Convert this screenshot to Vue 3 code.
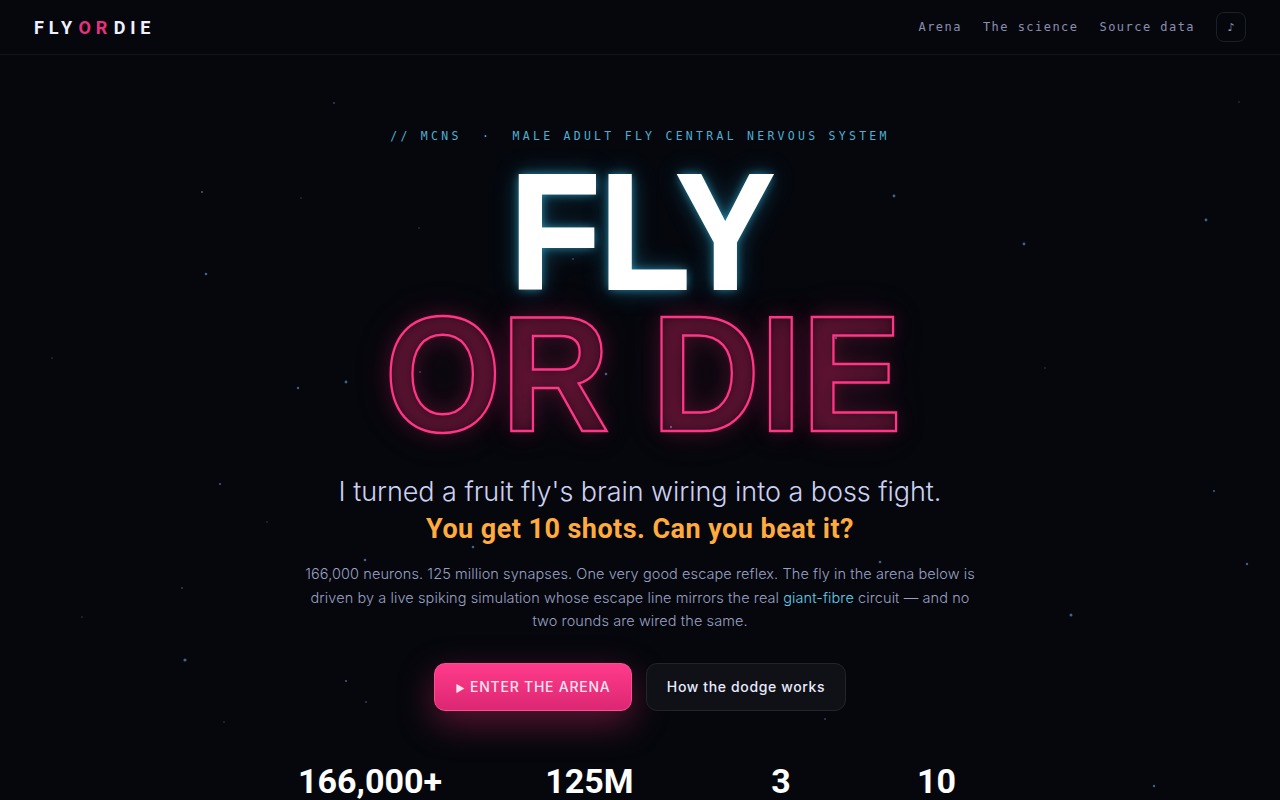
<template>
  <div class="page">
    <svg class="stars" width="1280" height="800" viewBox="0 0 1280 800">
      <circle v-for="(s, i) in stars" :key="i" :cx="s[0]" :cy="s[1]" :r="s[2]" :fill="s[3]" />
    </svg>

    <header class="topbar">
      <div class="logo">FLY <span class="logo-or">OR</span> DIE</div>
      <nav class="links">
        <a>Arena</a>
        <a>The science</a>
        <a>Source data</a>
        <button class="sound">♪</button>
      </nav>
    </header>

    <main class="hero">
      <p class="eyebrow">{{ eyebrow }}</p>
      <h1 class="title">
        <span class="fly">FLY</span>
        <span class="ordie">OR DIE</span>
      </h1>
      <p class="tagline">I turned a fruit fly's brain wiring into a boss fight.</p>
      <p class="challenge">You get 10 shots. Can you beat it?</p>
      <p class="blurb">
        166,000 neurons. 125 million synapses. One very good escape reflex. The fly in the arena below is<br />
        driven by a live spiking simulation whose escape line mirrors the real
        <a class="inline-link">giant-fibre</a> circuit — and no<br />
        two rounds are wired the same.
      </p>
      <div class="actions">
        <button class="btn btn-primary"><span class="play">▶</span> ENTER THE ARENA</button>
        <button class="btn btn-ghost">How the dodge works</button>
      </div>
      <div class="stats">
        <div v-for="s in statList" :key="s.value" class="stat" :class="s.cls">{{ s.value }}</div>
      </div>
    </main>
  </div>
</template>

<script setup>
const eyebrow = '// MCNS  ·  MALE ADULT FLY CENTRAL NERVOUS SYSTEM';

const statList = [
  { value: '166,000+', cls: 'stat-a' },
  { value: '125M', cls: 'stat-b' },
  { value: '3', cls: 'stat-c' },
  { value: '10', cls: 'stat-d' }
];

const dim = '#33425a';
const mid = '#4a6080';
const stars = [
  [334, 103, 1, dim], [1239, 102, 0.8, dim], [202, 192, 1, mid], [301, 198, 0.8, dim],
  [894, 196, 1.4, mid], [1206, 220, 1.4, mid], [419, 228, 0.8, dim], [1024, 244, 1.4, mid],
  [573, 259, 1, dim], [206, 274, 1.3, mid], [52, 358, 0.8, dim], [298, 388, 1.2, mid],
  [346, 382, 1.4, mid], [1045, 368, 0.8, dim], [420, 372, 1, dim], [606, 374, 1.3, mid],
  [836, 338, 1.2, mid], [671, 427, 1.2, mid], [220, 484, 1, mid], [1214, 491, 1, mid],
  [267, 522, 0.8, dim], [473, 547, 1.3, mid], [365, 560, 1.3, mid], [880, 562, 1.3, mid],
  [1247, 564, 1.2, mid], [182, 588, 1, dim], [82, 617, 0.8, dim], [1071, 615, 1.5, mid],
  [185, 660, 1.6, mid], [346, 681, 1, mid], [366, 702, 1, dim], [224, 722, 0.8, dim],
  [825, 719, 1, dim], [1154, 786, 1.2, mid]
];
</script>

<style scoped>
.page {
  position: relative;
  height: 800px;
  overflow: hidden;
  background: #05070d;
  color: #e8ebff;
  font-family: Inter, "Liberation Sans", sans-serif;
}

.stars {
  position: absolute;
  top: 0;
  left: 0;
}

.topbar {
  position: relative;
  height: 54px;
  display: flex;
  align-items: center;
  justify-content: space-between;
  padding: 0 34px;
  border-bottom: 1px solid #14161c;
}

.logo {
  font-family: Roboto, sans-serif;
  font-weight: 700;
  font-size: 18px;
  letter-spacing: 4.8px;
  word-spacing: -7.6px;
  white-space: pre;
  color: #eef0ff;
}

.logo-or {
  color: #e8317c;
}

.links {
  display: flex;
  align-items: center;
  gap: 21px;
  font-family: "DejaVu Sans Mono", monospace;
  font-size: 12px;
  letter-spacing: 1.46px;
  color: #8a8fb0;
}

.sound {
  width: 30px;
  height: 30px;
  padding: 0;
  background: transparent;
  border: 1px solid #1c1f28;
  border-radius: 8px;
  color: #8a8fb0;
  font-size: 11px;
  font-family: "DejaVu Sans", sans-serif;
}

.hero {
  position: relative;
  display: flex;
  flex-direction: column;
  align-items: center;
  padding-top: 74px;
}

.eyebrow {
  margin: 0;
  font-family: "DejaVu Sans Mono", monospace;
  font-size: 11.5px;
  line-height: 14px;
  letter-spacing: 3.27px;
  white-space: pre;
  color: #4db0d2;
}

.title {
  margin: 18px 0 0;
  display: flex;
  flex-direction: column;
  align-items: center;
  font-family: "Liberation Sans", sans-serif;
  font-weight: 700;
  font-size: 165px;
  line-height: 143px;
}

.fly {
  color: #fff;
  -webkit-text-stroke: 2px #fff;
  letter-spacing: -1px;
  margin-left: 4px;
  transform: scaleX(0.9);
  text-shadow: 0 0 10px rgba(60, 200, 240, 0.7), 0 0 26px rgba(40, 170, 220, 0.4);
}

.ordie {
  margin-left: 6px;
  margin-top: -1px;
  color: transparent;
  -webkit-text-stroke: 2.5px #ff3585;
  transform: scaleX(0.91);
  text-shadow: 0 0 6px rgba(255, 45, 120, 0.16), 0 0 22px rgba(255, 45, 120, 0.2), 0 0 44px rgba(255, 45, 120, 0.14);
}

.tagline {
  margin: 28px 0 0;
  font-weight: 300;
  font-size: 27px;
  line-height: 36px;
  letter-spacing: -0.05px;
  color: #ccd2f2;
}

.challenge {
  margin: 1px 0 0;
  font-family: Roboto, sans-serif;
  font-weight: 700;
  font-size: 27px;
  line-height: 36px;
  letter-spacing: 0.45px;
  color: #ffab3d;
}

.blurb {
  margin: 15px 0 0;
  width: 700px;
  text-align: center;
  font-weight: 300;
  font-size: 14.5px;
  line-height: 23.5px;
  letter-spacing: 0.09px;
  color: #9aa0c2;
}

.inline-link {
  color: #5fd0ea;
}

.actions {
  display: flex;
  gap: 14px;
  margin-top: 30px;
}

.btn {
  height: 48px;
  border-radius: 11px;
  font-family: Inter, sans-serif;
  font-size: 14px;
  font-weight: 500;
}

.btn-primary {
  width: 198px;
  border: 1px solid #ff4d93;
  background: linear-gradient(180deg, #ff3b8b, #dc2773);
  color: #ffe4f0;
  letter-spacing: 0.75px;
  box-shadow: 0 12px 36px rgba(255, 45, 120, 0.35);
}

.play {
  font-size: 10px;
}

.btn-ghost {
  width: 200px;
  border: 1px solid #22242c;
  background: #0f1116;
  color: #e8ebff;
  letter-spacing: 0.63px;
}

.stats {
  display: flex;
  gap: 65px;
  margin-top: 50px;
  font-family: Roboto, sans-serif;
  font-weight: 700;
  font-size: 34px;
  line-height: 40px;
  color: #fff;
}

.stat {
  text-align: center;
}

.stat-a { width: 145px; }
.stat-b { width: 164px; }
.stat-c { width: 89px; }
.stat-d { width: 92px; }
</style>

<style>
html,
body {
  background: #05070d;
  overflow: hidden;
}
</style>
